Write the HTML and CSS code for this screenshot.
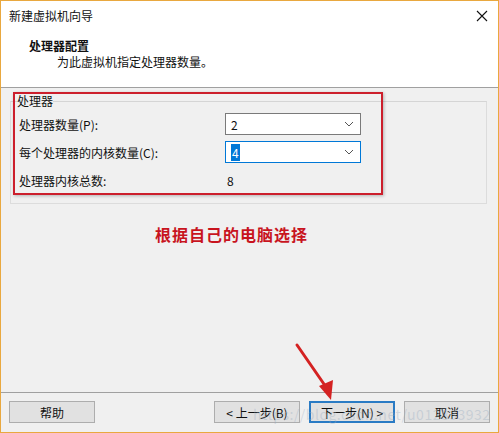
FILE: index.html
```html
<!doctype html>
<html>
<head>
<meta charset="utf-8">
<title>新建虚拟机向导</title>
<link rel="stylesheet" href="styles.css">
</head>
<body>
<div class="win">
  <div class="titlebar">
    <span class="title">新建虚拟机向导</span>
    <svg class="close" width="12" height="12" viewBox="0 0 12 12"><path d="M1 1 L11 11 M11 1 L1 11" stroke="#111" stroke-width="1.1" fill="none"/></svg>
  </div>
  <div class="header">
    <div class="h-title">处理器配置</div>
    <div class="h-sub">为此虚拟机指定处理器数量。</div>
  </div>
  <div class="content">
    <fieldset class="group">
      <legend>处理器</legend>
      <div class="row">
        <span class="label">处理器数量(P):</span>
        <div class="combo"><span>2</span><svg class="chev" width="10" height="6" viewBox="0 0 10 6"><path d="M1 1 L5 5 L9 1" stroke="#555" fill="none"/></svg></div>
      </div>
      <div class="row">
        <span class="label">每个处理器的内核数量(C):</span>
        <div class="combo focus"><span class="sel">4</span><svg class="chev" width="10" height="6" viewBox="0 0 10 6"><path d="M1 1 L5 5 L9 1" stroke="#555" fill="none"/></svg></div>
      </div>
      <div class="row">
        <span class="label">处理器内核总数:</span>
        <span class="value">8</span>
      </div>
    </fieldset>
    <div class="note">根据自己的电脑选择</div>
  </div>
  <div class="footer">
    <button class="btn">帮助</button>
    <div class="nav">
      <button class="btn">&lt; 上一步(B)</button>
      <button class="btn default">下一步(N) &gt;</button>
      <button class="btn">取消</button>
    </div>
  </div>
  <div class="highlight"></div>
  <svg class="arrow" width="50" height="62" viewBox="0 0 50 62">
    <line x1="4" y1="3" x2="33" y2="45" stroke="#d42222" stroke-width="3" stroke-linecap="round"/>
    <polygon points="26,44 40,38 38,58" fill="#d42222"/>
  </svg>
  <div class="watermark">https://blog.csdn.net/u012833932</div>
</div>
</body>
</html>
```

FILE: styles.css
```css
body {
  margin: 0;
  background: white;
}

.win {
  position: relative;
  width: 499px;
  height: 433px;
  box-sizing: border-box;
  border: 1px solid #e9a83f;
  display: flex;
  flex-direction: column;
  background: #f0f0f0;
  font-family: "Noto Sans CJK SC", "Liberation Sans", sans-serif;
  font-size: 12px;
  color: #111;
}

.titlebar {
  height: 29px;
  background: white;
  display: flex;
  align-items: center;
  justify-content: space-between;
  padding: 0 10px 0 8px;
}
.close {
  margin-top: 1px;
}

.header {
  height: 58px;
  background: white;
  border-bottom: 1px solid #a0a0a0;
  box-sizing: border-box;
  padding: 8px 0 0 28px;
  line-height: 16px;
}
.h-title {
  font-weight: bold;
}
.h-sub {
  padding-left: 28px;
}

.content {
  flex: 1;
  padding: 5px 11px 0 9px;
}

.group {
  margin: 0;
  padding: 0 8px 12px 8px;
  border: 1px solid #dcdcdc;
  border-top-color: #d5d5d5;
}
.group legend {
  padding: 0;
  margin-left: -2px;
  line-height: 16px;
}

.row {
  display: flex;
  align-items: center;
  height: 22px;
  margin-top: 6px;
}
.row:first-of-type {
  margin-top: 4px;
}
.label {
  width: 206px;
}
.combo {
  width: 136px;
  height: 22px;
  box-sizing: border-box;
  border: 1px solid #7a7a7a;
  background: white;
  display: flex;
  align-items: center;
  justify-content: space-between;
  padding: 0 6px 0 5px;
}
.combo.focus {
  border-color: #0078d7;
}
.sel {
  background: #0078d7;
  color: white;
  padding: 0 1px;
}
.value {
  padding-left: 2px;
}

.note {
  margin-top: 19px;
  padding-left: 145px;
  color: #c8141e;
  font-size: 16px;
  font-weight: bold;
  letter-spacing: 1px;
  line-height: 22px;
}

.footer {
  height: 40px;
  border-top: 1px solid #a0a0a0;
  box-sizing: border-box;
  display: flex;
  justify-content: space-between;
  padding: 8px 8px 0 8px;
}
.nav {
  display: flex;
  gap: 9px;
}
.btn {
  width: 86px;
  height: 22px;
  box-sizing: border-box;
  border: 1px solid #adadad;
  background: #e1e1e1;
  font-family: inherit;
  font-size: 12px;
  color: #111;
  padding: 0;
}
.btn.default {
  border: 2px solid #2a7bc4;
}

/* red annotation box drawn over the group */
.highlight {
  position: absolute;
  left: 12px;
  top: 91px;
  width: 370px;
  height: 103px;
  box-sizing: border-box;
  border: 2px solid #cc1f2c;
  box-shadow: 1px 1px 3px rgba(0, 0, 0, 0.25);
  pointer-events: none;
}

.arrow {
  position: absolute;
  left: 292px;
  top: 341px;
}

.watermark {
  position: absolute;
  left: 252px;
  top: 403px;
  font-size: 14px;
  color: rgba(150, 170, 190, 0.35);
  letter-spacing: 0.5px;
  pointer-events: none;
}
```
